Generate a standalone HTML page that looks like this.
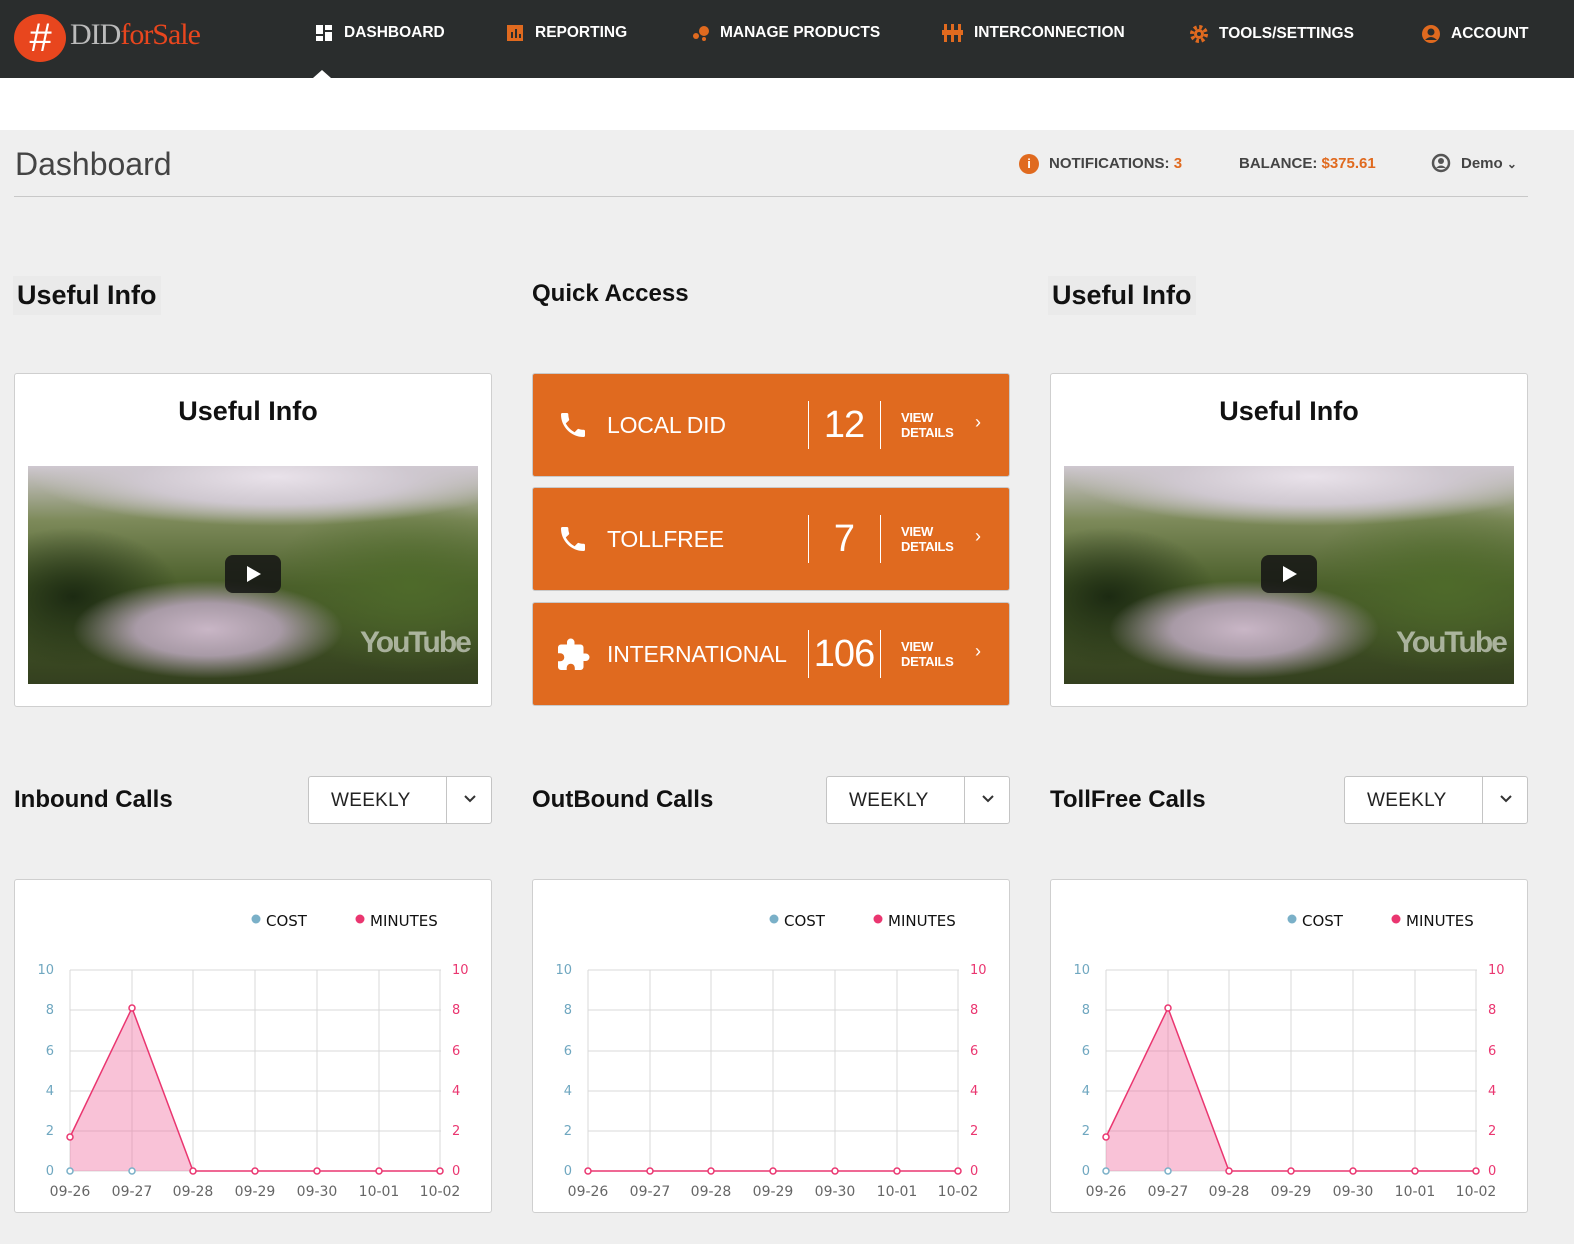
<!DOCTYPE html>
<html><head><meta charset="utf-8">
<style>
*{box-sizing:border-box;margin:0;padding:0}
body{width:1574px;height:1244px;background:#efefef;font-family:"Liberation Sans",sans-serif;position:relative;overflow:hidden}
.nav{position:absolute;left:0;top:0;width:1574px;height:78px;background:#2a2d2d}
.nav .it{position:absolute;top:24px;color:#fff;font-weight:bold;font-size:15.5px;letter-spacing:0;display:flex;align-items:center;gap:10px}
.white{position:absolute;left:0;top:78px;width:1574px;height:52px;background:#fff}
.abs{position:absolute}
.h2{font-weight:bold;font-size:27px;color:#111}
.card{position:absolute;background:#fff;border:1px solid #cfcfcf;border-radius:3px}
.vid{position:absolute;overflow:hidden;background:
radial-gradient(ellipse 40% 30% at 40% 75%,#c9b6c6 0,#a89aa6 40%,transparent 75%),
radial-gradient(ellipse 60% 25% at 55% 5%,#e9e2ea 0,#cfc8d0 50%,transparent 90%),
radial-gradient(ellipse 30% 40% at 10% 60%,#1c2a12 0,transparent 80%),
radial-gradient(ellipse 40% 50% at 85% 55%,#4e6a2a 0,transparent 80%),
linear-gradient(180deg,#cfc8d0 0%,#7d8a5a 25%,#4a5e2a 55%,#34401f 100%)}
.play{position:absolute;width:56px;height:38px;background:rgba(20,20,20,.85);border-radius:8px}
.play:after{content:"";position:absolute;left:22px;top:11px;border-left:14px solid #fff;border-top:8px solid transparent;border-bottom:8px solid transparent}
.yt{position:absolute;font-size:30px;font-weight:bold;color:rgba(255,255,255,.55);letter-spacing:-2px}
.qa{position:absolute;left:532px;width:478px;height:104px;background:#e06a1f;border:1px solid #c9c9c9;border-radius:3px;color:#fff}
.qa .lbl{position:absolute;left:74px;top:38px;font-size:23px;letter-spacing:-0.2px}
.qa .sep{position:absolute;top:27px;width:1px;height:48px;background:#fff}
.qa .num{position:absolute;top:30px;font-size:38px;width:72px;text-align:center;letter-spacing:-1px}
.qa .vd{position:absolute;left:368px;top:36px;font-size:13px;font-weight:bold;line-height:15px;letter-spacing:-0.3px}
.qa .ch{position:absolute;left:442px;top:38px;font-size:18px}
.sel{position:absolute;width:184px;height:48px;background:#fff;border:1px solid #c4c4c4;border-radius:3px}
.sel span{position:absolute;left:22px;top:13px;font-size:19px;color:#222;letter-spacing:.3px}
.sel i{position:absolute;left:137px;top:0;width:1px;height:46px;background:#c4c4c4}
.sel svg{position:absolute;left:154px;top:17px}
.chart{position:absolute;width:478px;height:334px;background:#fff;border:1px solid #cfcfcf;border-radius:3px}
.chart svg{position:absolute;left:0;top:0}
</style></head><body>
<div class="nav">
  <div class="abs" style="left:14px;top:14px;width:52px;height:48px;border-radius:50%/50%;background:#e8461e;color:#fff;font-size:40px;text-align:center;line-height:48px;font-style:italic">#</div>
  <div class="abs" style="left:70px;top:18px;font-family:'Liberation Serif',serif;font-size:30px;color:#bbb;letter-spacing:-1px">DID<span style="color:#e8461e">forSale</span></div>
  <div class="it" style="left:316px"><svg width="18" height="16"><rect x="0" y="0" width="7" height="9" fill="#fff"/><rect x="9" y="0" width="7" height="5" fill="#fff"/><rect x="0" y="11" width="7" height="5" fill="#fff"/><rect x="9" y="7" width="7" height="9" fill="#fff"/></svg>DASHBOARD</div>
  <div class="it" style="left:507px"><svg width="18" height="16"><rect width="16" height="16" fill="#e06a1f"/><rect x="4" y="7" width="2" height="6" fill="#2a2d2d"/><rect x="8" y="4" width="2" height="9" fill="#2a2d2d"/><rect x="12" y="9" width="2" height="4" fill="#2a2d2d"/></svg>REPORTING</div>
  <div class="it" style="left:692px"><svg width="18" height="16"><circle cx="12" cy="6" r="5" fill="#e06a1f"/><circle cx="4" cy="11" r="3" fill="#e06a1f"/><circle cx="12" cy="14" r="2" fill="#e06a1f"/></svg>MANAGE PRODUCTS</div>
  <div class="it" style="left:942px"><svg width="22" height="18"><g fill="#e06a1f"><rect x="2" y="0" width="3" height="18"/><rect x="9" y="0" width="3" height="18"/><rect x="16" y="0" width="3" height="18"/><rect x="0" y="6" width="21" height="5"/></g></svg>INTERCONNECTION</div>
  <div class="it" style="left:1189px"><svg width="20" height="20" viewBox="0 0 20 20"><circle cx="10" cy="10" r="7" fill="none" stroke="#e06a1f" stroke-width="4" stroke-dasharray="3 2.5"/><circle cx="10" cy="10" r="5" fill="#e06a1f"/><circle cx="10" cy="10" r="2" fill="#2a2d2d"/></svg>TOOLS/SETTINGS</div>
  <div class="it" style="left:1421px"><svg width="20" height="20"><circle cx="10" cy="10" r="9" fill="#e06a1f"/><circle cx="10" cy="8" r="3.5" fill="#2a2d2d"/><path d="M4 16 Q10 10 16 16" fill="#2a2d2d"/></svg>ACCOUNT</div>
  <div class="abs" style="left:313px;top:70px;border-left:9px solid transparent;border-right:9px solid transparent;border-bottom:8px solid #fff"></div>
</div>
<div class="white"></div>
<div class="abs" style="left:15px;top:146px;font-size:32px;color:#444">Dashboard</div>
<div class="abs" style="left:1019px;top:154px;width:20px;height:20px;border-radius:50%;background:#e06a1f;color:#fff;font-size:13px;font-weight:bold;text-align:center;line-height:20px">i</div>
<div class="abs" style="left:1049px;top:155px;font-size:15px;font-weight:bold;color:#444">NOTIFICATIONS: <span style="color:#e06a1f">3</span></div>
<div class="abs" style="left:1239px;top:155px;font-size:15px;font-weight:bold;color:#444">BALANCE: <span style="color:#e06a1f">$375.61</span></div>
<svg class="abs" style="left:1431px;top:153px" width="20" height="20"><circle cx="10" cy="10" r="8" fill="none" stroke="#555" stroke-width="2.5"/><circle cx="10" cy="8" r="3" fill="#555"/><path d="M5 15 Q10 10 15 15" fill="#555"/></svg>
<div class="abs" style="left:1461px;top:155px;font-size:15px;font-weight:bold;color:#444">Demo <span style="font-size:12px">&#8964;</span></div>
<div class="abs" style="left:14px;top:196px;width:1514px;height:1px;background:#c8c8c8"></div>

<div class="abs h2" style="left:13px;top:276px;background:#eaeaea;padding:4px 4px">Useful Info</div>
<div class="abs" style="left:532px;top:280px;font-size:24px;font-weight:bold;color:#111">Quick Access</div>
<div class="abs h2" style="left:1048px;top:276px;background:#eaeaea;padding:4px 4px">Useful Info</div>

<div class="card" style="left:14px;top:373px;width:478px;height:334px">
  <div class="abs h2" style="left:0;width:466px;text-align:center;top:22px">Useful Info</div>
  <div class="vid" style="left:13px;top:92px;width:450px;height:218px"><div class="play" style="left:197px;top:89px"></div><div class="yt" style="left:332px;top:160px">YouTube</div></div>
</div>
<div class="card" style="left:1050px;top:373px;width:478px;height:334px">
  <div class="abs h2" style="left:0;width:476px;text-align:center;top:22px">Useful Info</div>
  <div class="vid" style="left:13px;top:92px;width:450px;height:218px"><div class="play" style="left:197px;top:89px"></div><div class="yt" style="left:332px;top:160px">YouTube</div></div>
</div>

<div class="qa" style="top:373px">
  <svg class="abs" style="left:24px;top:35px" width="32" height="32" viewBox="0 0 24 24"><path fill="#fff" d="M6.6 10.8c1.4 2.8 3.8 5.1 6.6 6.6l2.2-2.2c.3-.3.7-.4 1-.2 1.1.4 2.3.6 3.6.6.6 0 1 .4 1 1V20c0 .6-.4 1-1 1C10.6 21 3 13.4 3 4c0-.6.4-1 1-1h3.5c.6 0 1 .4 1 1 0 1.3.2 2.5.6 3.6.1.3 0 .7-.2 1z"/></svg>
  <div class="lbl">LOCAL DID</div><div class="sep" style="left:275px"></div><div class="num" style="left:275px">12</div><div class="sep" style="left:347px"></div>
  <div class="vd">VIEW<br>DETAILS</div><div class="ch">&#8250;</div>
</div>
<div class="qa" style="top:487px">
  <svg class="abs" style="left:24px;top:35px" width="32" height="32" viewBox="0 0 24 24"><path fill="#fff" d="M6.6 10.8c1.4 2.8 3.8 5.1 6.6 6.6l2.2-2.2c.3-.3.7-.4 1-.2 1.1.4 2.3.6 3.6.6.6 0 1 .4 1 1V20c0 .6-.4 1-1 1C10.6 21 3 13.4 3 4c0-.6.4-1 1-1h3.5c.6 0 1 .4 1 1 0 1.3.2 2.5.6 3.6.1.3 0 .7-.2 1z"/></svg>
  <div class="lbl">TOLLFREE</div><div class="sep" style="left:275px"></div><div class="num" style="left:275px">7</div><div class="sep" style="left:347px"></div>
  <div class="vd">VIEW<br>DETAILS</div><div class="ch">&#8250;</div>
</div>
<div class="qa" style="top:602px">
  <svg class="abs" style="left:22px;top:34px" width="36" height="36" viewBox="0 0 24 24"><path fill="#fff" d="M20.5 11H19V7a2 2 0 0 0-2-2h-4V3.5a2.5 2.5 0 0 0-5 0V5H4a2 2 0 0 0-2 2v3.8h1.5a2.7 2.7 0 0 1 0 5.4H2V20a2 2 0 0 0 2 2h3.8v-1.5a2.7 2.7 0 0 1 5.4 0V22H17a2 2 0 0 0 2-2v-4h1.5a2.5 2.5 0 0 0 0-5z"/></svg>
  <div class="lbl">INTERNATIONAL</div><div class="sep" style="left:275px"></div><div class="num" style="left:275px">106</div><div class="sep" style="left:347px"></div>
  <div class="vd">VIEW<br>DETAILS</div><div class="ch">&#8250;</div>
</div>

<div class="abs" style="left:14px;top:786px;font-size:24px;font-weight:bold;color:#111">Inbound Calls</div>
<div class="abs" style="left:532px;top:786px;font-size:24px;font-weight:bold;color:#111">OutBound Calls</div>
<div class="abs" style="left:1050px;top:786px;font-size:24px;font-weight:bold;color:#111">TollFree Calls</div>
<div class="sel" style="left:308px;top:776px"><span>WEEKLY</span><i></i><svg width="14" height="10"><path d="M2 2 L7 7 L12 2" fill="none" stroke="#333" stroke-width="2"/></svg></div>
<div class="sel" style="left:826px;top:776px"><span>WEEKLY</span><i></i><svg width="14" height="10"><path d="M2 2 L7 7 L12 2" fill="none" stroke="#333" stroke-width="2"/></svg></div>
<div class="sel" style="left:1344px;top:776px"><span>WEEKLY</span><i></i><svg width="14" height="10"><path d="M2 2 L7 7 L12 2" fill="none" stroke="#333" stroke-width="2"/></svg></div>

<div class="chart" style="left:14px;top:879px"><svg width="478" height="334" font-family="DejaVu Sans, sans-serif">
<g stroke="#d9d9d9" stroke-width="1"><line x1="55" y1="90" x2="426" y2="90"/><line x1="55" y1="130" x2="426" y2="130"/><line x1="55" y1="171" x2="426" y2="171"/><line x1="55" y1="211" x2="426" y2="211"/><line x1="55" y1="251" x2="426" y2="251"/><line x1="55" y1="291" x2="426" y2="291"/>
<line x1="55" y1="90" x2="55" y2="291"/><line x1="117" y1="90" x2="117" y2="291"/><line x1="178" y1="90" x2="178" y2="291"/><line x1="240" y1="90" x2="240" y2="291"/><line x1="302" y1="90" x2="302" y2="291"/><line x1="364" y1="90" x2="364" y2="291"/><line x1="425" y1="90" x2="425" y2="291"/></g>
<path d="M55 291 L55 257 L117 128 L178 291 Z" fill="rgba(240,110,160,.42)"/>
<path d="M55 257 L117 128 L178 291 L425 291" fill="none" stroke="#ea3670" stroke-width="1.5"/>
<g fill="#fff" stroke="#ea3670" stroke-width="1.5"><circle cx="55" cy="257" r="3"/><circle cx="117" cy="128" r="3"/><circle cx="178" cy="291" r="3"/><circle cx="240" cy="291" r="3"/><circle cx="302" cy="291" r="3"/><circle cx="364" cy="291" r="3"/><circle cx="425" cy="291" r="3"/></g>
<g fill="#fff" stroke="#7ab0c8" stroke-width="1.5"><circle cx="55" cy="291" r="3"/><circle cx="117" cy="291" r="3"/></g>
<g fill="#6fa7c0" font-size="13" text-anchor="end"><text x="39" y="94">10</text><text x="39" y="134">8</text><text x="39" y="175">6</text><text x="39" y="215">4</text><text x="39" y="255">2</text><text x="39" y="295">0</text></g>
<g fill="#ea3670" font-size="13"><text x="437" y="94">10</text><text x="437" y="134">8</text><text x="437" y="175">6</text><text x="437" y="215">4</text><text x="437" y="255">2</text><text x="437" y="295">0</text></g>
<g fill="#666" font-size="14" text-anchor="middle"><text x="55" y="316">09-26</text><text x="117" y="316">09-27</text><text x="178" y="316">09-28</text><text x="240" y="316">09-29</text><text x="302" y="316">09-30</text><text x="364" y="316">10-01</text><text x="425" y="316">10-02</text></g>
<circle cx="241" cy="39" r="4.5" fill="#7ab0c8"/><text x="251" y="46" font-size="15" fill="#111">COST</text>
<circle cx="345" cy="39" r="4.5" fill="#ea3670"/><text x="355" y="46" font-size="15" fill="#111">MINUTES</text>
</svg></div>

<div class="chart" style="left:532px;top:879px"><svg width="478" height="334" font-family="DejaVu Sans, sans-serif">
<g stroke="#d9d9d9" stroke-width="1"><line x1="55" y1="90" x2="426" y2="90"/><line x1="55" y1="130" x2="426" y2="130"/><line x1="55" y1="171" x2="426" y2="171"/><line x1="55" y1="211" x2="426" y2="211"/><line x1="55" y1="251" x2="426" y2="251"/><line x1="55" y1="291" x2="426" y2="291"/>
<line x1="55" y1="90" x2="55" y2="291"/><line x1="117" y1="90" x2="117" y2="291"/><line x1="178" y1="90" x2="178" y2="291"/><line x1="240" y1="90" x2="240" y2="291"/><line x1="302" y1="90" x2="302" y2="291"/><line x1="364" y1="90" x2="364" y2="291"/><line x1="425" y1="90" x2="425" y2="291"/></g>
<path d="M55 291 L425 291" fill="none" stroke="#ea3670" stroke-width="1.5"/>
<g fill="#fff" stroke="#ea3670" stroke-width="1.5"><circle cx="55" cy="291" r="3"/><circle cx="117" cy="291" r="3"/><circle cx="178" cy="291" r="3"/><circle cx="240" cy="291" r="3"/><circle cx="302" cy="291" r="3"/><circle cx="364" cy="291" r="3"/><circle cx="425" cy="291" r="3"/></g>
<g fill="#6fa7c0" font-size="13" text-anchor="end"><text x="39" y="94">10</text><text x="39" y="134">8</text><text x="39" y="175">6</text><text x="39" y="215">4</text><text x="39" y="255">2</text><text x="39" y="295">0</text></g>
<g fill="#ea3670" font-size="13"><text x="437" y="94">10</text><text x="437" y="134">8</text><text x="437" y="175">6</text><text x="437" y="215">4</text><text x="437" y="255">2</text><text x="437" y="295">0</text></g>
<g fill="#666" font-size="14" text-anchor="middle"><text x="55" y="316">09-26</text><text x="117" y="316">09-27</text><text x="178" y="316">09-28</text><text x="240" y="316">09-29</text><text x="302" y="316">09-30</text><text x="364" y="316">10-01</text><text x="425" y="316">10-02</text></g>
<circle cx="241" cy="39" r="4.5" fill="#7ab0c8"/><text x="251" y="46" font-size="15" fill="#111">COST</text>
<circle cx="345" cy="39" r="4.5" fill="#ea3670"/><text x="355" y="46" font-size="15" fill="#111">MINUTES</text>
</svg></div>

<div class="chart" style="left:1050px;top:879px"><svg width="478" height="334" font-family="DejaVu Sans, sans-serif">
<g stroke="#d9d9d9" stroke-width="1"><line x1="55" y1="90" x2="426" y2="90"/><line x1="55" y1="130" x2="426" y2="130"/><line x1="55" y1="171" x2="426" y2="171"/><line x1="55" y1="211" x2="426" y2="211"/><line x1="55" y1="251" x2="426" y2="251"/><line x1="55" y1="291" x2="426" y2="291"/>
<line x1="55" y1="90" x2="55" y2="291"/><line x1="117" y1="90" x2="117" y2="291"/><line x1="178" y1="90" x2="178" y2="291"/><line x1="240" y1="90" x2="240" y2="291"/><line x1="302" y1="90" x2="302" y2="291"/><line x1="364" y1="90" x2="364" y2="291"/><line x1="425" y1="90" x2="425" y2="291"/></g>
<path d="M55 291 L55 257 L117 128 L178 291 Z" fill="rgba(240,110,160,.42)"/>
<path d="M55 257 L117 128 L178 291 L425 291" fill="none" stroke="#ea3670" stroke-width="1.5"/>
<g fill="#fff" stroke="#ea3670" stroke-width="1.5"><circle cx="55" cy="257" r="3"/><circle cx="117" cy="128" r="3"/><circle cx="178" cy="291" r="3"/><circle cx="240" cy="291" r="3"/><circle cx="302" cy="291" r="3"/><circle cx="364" cy="291" r="3"/><circle cx="425" cy="291" r="3"/></g>
<g fill="#fff" stroke="#7ab0c8" stroke-width="1.5"><circle cx="55" cy="291" r="3"/><circle cx="117" cy="291" r="3"/></g>
<g fill="#6fa7c0" font-size="13" text-anchor="end"><text x="39" y="94">10</text><text x="39" y="134">8</text><text x="39" y="175">6</text><text x="39" y="215">4</text><text x="39" y="255">2</text><text x="39" y="295">0</text></g>
<g fill="#ea3670" font-size="13"><text x="437" y="94">10</text><text x="437" y="134">8</text><text x="437" y="175">6</text><text x="437" y="215">4</text><text x="437" y="255">2</text><text x="437" y="295">0</text></g>
<g fill="#666" font-size="14" text-anchor="middle"><text x="55" y="316">09-26</text><text x="117" y="316">09-27</text><text x="178" y="316">09-28</text><text x="240" y="316">09-29</text><text x="302" y="316">09-30</text><text x="364" y="316">10-01</text><text x="425" y="316">10-02</text></g>
<circle cx="241" cy="39" r="4.5" fill="#7ab0c8"/><text x="251" y="46" font-size="15" fill="#111">COST</text>
<circle cx="345" cy="39" r="4.5" fill="#ea3670"/><text x="355" y="46" font-size="15" fill="#111">MINUTES</text>
</svg></div>
</body></html>
